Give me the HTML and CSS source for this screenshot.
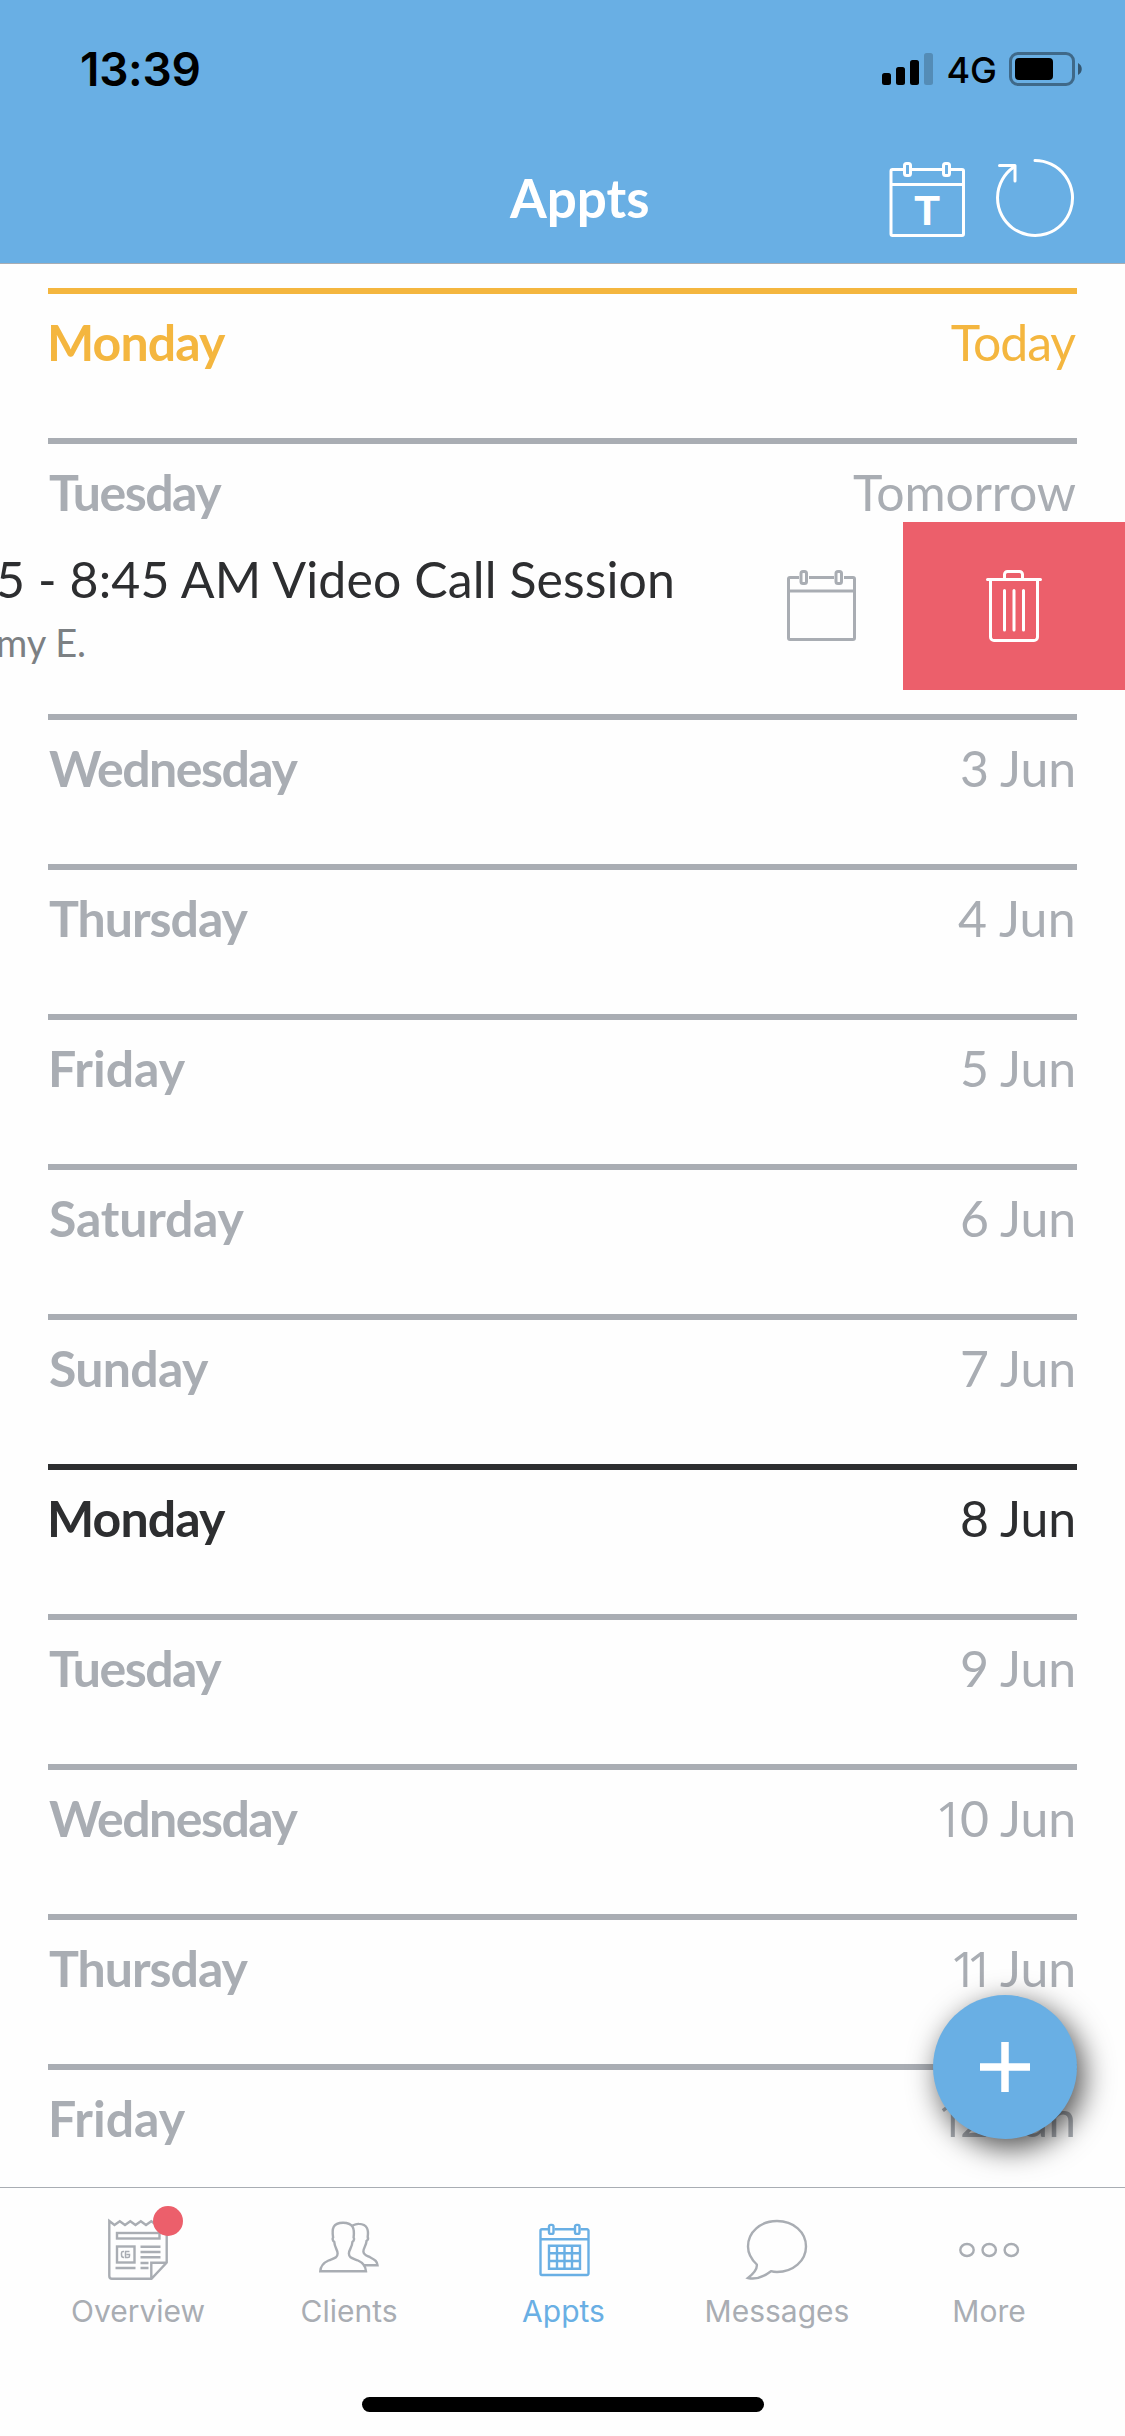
FILE: index.html
```
<!DOCTYPE html>
<html lang="en">
<head>
<meta charset="utf-8">
<title>Appts</title>
<link rel="stylesheet" href="styles.css">
</head>
<body>
<div class="app">
  <header class="header">
    <div class="status">
      <span class="status-time">13:39</span>
      <span class="status-right">
        <svg class="signal" width="51" height="32" viewBox="0 0 51 32">
          <rect x="0" y="20" width="9" height="12" rx="2.5"/>
          <rect x="14" y="14" width="9" height="18" rx="2.5"/>
          <rect x="28" y="7" width="9" height="25" rx="2.5"/>
          <rect x="42" y="0" width="9" height="32" rx="2.5" opacity=".2"/>
        </svg>
        <span class="network">4G</span>
        <svg class="battery" width="73" height="34" viewBox="0 0 73 34">
          <rect x="1.5" y="1.5" width="63" height="31" rx="7.5" fill="none" stroke="#000" stroke-width="3" opacity=".4"/>
          <rect x="6" y="6" width="38" height="22" rx="4"/>
          <path d="M69 11C74 13.500 74 20.500 69 23Z" opacity=".5"/>
        </svg>
      </span>
    </div>
    <div class="nav">
      <h1 class="nav-title">Appts</h1>
      <div class="nav-actions">
        <svg class="line-icon" width="80" height="80" viewBox="0 0 80 80">
          <path d="M16 9.500H5.500a1.500 1.500 0 0 0-1.500 1.500V74a1.500 1.500 0 0 0 1.500 1.500H75a1.500 1.500 0 0 0 1.500-1.500V11a1.500 1.500 0 0 0-1.500-1.500H64M25 9.500H55M4 24.500H76.500"/>
          <rect x="17.500" y="3.500" width="6" height="12" rx="2"/>
          <rect x="56.500" y="3.500" width="6" height="12" rx="2"/>
          <text class="today-letter" x="40" y="65" text-anchor="middle">T</text>
        </svg>
        <svg class="line-icon" width="80" height="80" viewBox="0 0 80 80">
          <path d="M40 .500A37.500 37.500 0 1 1 18.500 7.300M4.500 5.500H20V21"/>
        </svg>
      </div>
    </div>
  </header>

  <main class="schedule">
    <section class="day day--today"><div class="day-head"><span class="name name--mon">Monday</span><span class="date date--today">Today</span></div></section>
    <section class="day">
      <div class="day-head"><span class="name name--tue">Tuesday</span><span class="date date--tomorrow">Tomorrow</span></div>
      <div class="session">
        <div class="session-text">
          <div class="session-title">5 - 8:45 AM Video Call Session</div>
          <div class="session-client">my E.</div>
        </div>
        <svg class="session-calendar" width="70" height="74" viewBox="0 0 70 74">
          <path d="M12 7.500H3a1.500 1.500 0 0 0-1.500 1.500V68a1.500 1.500 0 0 0 1.500 1.500H66a1.500 1.500 0 0 0 1.500-1.500V9a1.500 1.500 0 0 0-1.500-1.500H57M22 7.500H47M1.500 21H67.500"/>
          <rect x="14" y="1.500" width="5.500" height="12" rx="2"/>
          <rect x="49" y="1.500" width="5.500" height="12" rx="2"/>
        </svg>
        <div class="delete">
          <svg class="line-icon" width="56" height="72" viewBox="0 0 56 72">
            <path d="M1.500 9.500H54.500M18.500 9V4.500a3 3 0 0 1 3-3H33.500a3 3 0 0 1 3 3V9M4.500 10V67a3.500 3.500 0 0 0 3.500 3.500H48a3.500 3.500 0 0 0 3.500-3.500V10M18.500 20.500V60M28 20.500V60M37.500 20.500V60"/>
          </svg>
        </div>
      </div>
    </section>
    <section class="day"><div class="day-head"><span class="name name--wed">Wednesday</span><span class="date date--single">3 Jun</span></div></section>
    <section class="day"><div class="day-head"><span class="name name--thu">Thursday</span><span class="date">4 Jun</span></div></section>
    <section class="day"><div class="day-head"><span class="name name--fri">Friday</span><span class="date date--single">5 Jun</span></div></section>
    <section class="day"><div class="day-head"><span class="name name--sat">Saturday</span><span class="date date--single">6 Jun</span></div></section>
    <section class="day"><div class="day-head"><span class="name name--sun">Sunday</span><span class="date date--single">7 Jun</span></div></section>
    <section class="day day--week"><div class="day-head"><span class="name name--mon">Monday</span><span class="date date--single">8 Jun</span></div></section>
    <section class="day"><div class="day-head"><span class="name name--tue">Tuesday</span><span class="date date--single">9 Jun</span></div></section>
    <section class="day"><div class="day-head"><span class="name name--wed">Wednesday</span><span class="date date--single"><span class="one">1</span>0 Jun</span></div></section>
    <section class="day"><div class="day-head"><span class="name name--thu">Thursday</span><span class="date date--single"><span class="one one--pair">1</span><span class="one one--last">1</span> Jun</span></div></section>
    <section class="day"><div class="day-head"><span class="name name--fri">Friday</span><span class="date date--single"><span class="one one--last">1</span>2 Jun</span></div></section>
    <button class="fab" aria-label="Add appointment">
      <svg width="50" height="50" viewBox="0 0 50 50"><path d="M25 0V50M0 25H50" stroke="#fff" stroke-width="7.500"/></svg>
    </button>
  </main>

  <nav class="tabs">
    <a class="tab">
      <span class="tab-icon">
        <svg width="60" height="60" viewBox="0 0 60 60">
          <path d="M1.300 1L6.500 5L11.800 1.300L17 5L22.300 1.300L27.500 5L32.800 1.300L38 5L43.300 1.300L48.500 5L53.800 1.300L58.700 5V42.500L43.500 58.700H4a2.700 2.700 0 0 1-2.700-2.700ZM58.700 42.700H43.300V58.500"/>
          <rect x="9" y="13" width="42.500" height="5.500"/>
          <rect x="9" y="26.500" width="17.500" height="16"/>
          <path d="M32.500 26.700H52.500M32.500 32H52.500M32.500 37.300H52.500M32.500 43H40.500M32.500 48H40.500M7.500 48H27.500"/>
          <path class="thin" d="M16 31.500H15a1.500 1.500 0 0 0-1.500 1.500V35a2.500 2.500 0 0 0 2.500 2.500M21.500 31.500H17.500V37.500H20a1.500 1.500 0 0 0 1.500-1.500V34.500H18.500"/>
        </svg>
        <span class="badge"></span>
      </span>
      <span class="tab-label">Overview</span>
    </a>
    <a class="tab">
      <span class="tab-icon">
        <svg width="60" height="60" viewBox="0 0 60 60">
          <path d="M1.300 51.200C1.600 46 4 43 9.500 40.500C15 38.200 18.600 38 18.600 33.500C18.600 29.500 15.500 27.500 15.300 22C13.400 20.500 13.300 18.500 14.100 17.500C12.800 9 13.500 2.800 24 2.700C34.500 2.800 35.700 9 34.600 17.500C35.400 18.500 35.300 20.500 33.400 22C33.200 27.500 29.900 29.500 29.900 33.500C29.900 38 33.500 38.200 39 40.500C44.500 43 46.700 46 47 51.200Z"/>
          <path d="M33.500 5.500C36 4.300 37.500 3.700 40 3.900C48.500 4.300 49.700 10 48.700 17C49.400 18.500 49 20 47.500 21C47.300 26 44.400 27.500 44.400 31.500C44.400 35 47.500 35.500 51.500 37.500C56.500 40 58 41.500 58.500 45.200H45"/>
        </svg>
      </span>
      <span class="tab-label">Clients</span>
    </a>
    <a class="tab tab--active">
      <span class="tab-icon">
        <svg width="60" height="60" viewBox="0 0 60 60">
          <path d="M14.500 9.300H8a1.500 1.500 0 0 0-1.500 1.500V53.500a1.500 1.500 0 0 0 1.500 1.500H53a1.500 1.500 0 0 0 1.500-1.500V10.800a1.500 1.500 0 0 0-1.500-1.500H46.500M20.500 9.300H40.500M6.500 19.300H54.500"/>
          <rect x="15" y="4.900" width="4.500" height="9" rx="1.700"/>
          <rect x="41" y="4.900" width="4.500" height="9" rx="1.700"/>
          <path d="M15 25.800H46V48.700H15ZM15 33.300H46M15 41H46M23 25.800V48.700M30.500 25.800V48.700M38 25.800V48.700"/>
        </svg>
      </span>
      <span class="tab-label">Appts</span>
    </a>
    <a class="tab">
      <span class="tab-icon">
        <svg width="60" height="60" viewBox="0 0 60 60">
          <path d="M1 58C6 54 10.500 49 9.800 44.500C4.500 39.500 1 34 1 26.500C1 12 13.500 1 30 1C46.500 1 59 12 59 26.500C59 41 46 52 30 52C27.500 52 26 51.800 24 51.200C17 56.500 9 60 1 58Z"/>
        </svg>
      </span>
      <span class="tab-label">Messages</span>
    </a>
    <a class="tab">
      <span class="tab-icon">
        <svg width="60" height="60" viewBox="0 0 60 60">
          <ellipse cx="8" cy="30" rx="6.700" ry="6"/>
          <ellipse cx="30.200" cy="30" rx="6.700" ry="6"/>
          <ellipse cx="52.300" cy="30" rx="6.700" ry="6"/>
        </svg>
      </span>
      <span class="tab-label">More</span>
    </a>
  </nav>
  <div class="home-area"><div class="home-indicator"></div></div>
</div>
</body>
</html>
```
FILE: styles.css
```
* { box-sizing: border-box; }

body {
  margin: 0;
  background: #fefefe;
  font-family: Lato, "Liberation Sans", sans-serif;
}

svg { display: block; overflow: visible; }

.app {
  display: flex;
  flex-direction: column;
  width: 1125px;
  height: 2436px;
  overflow: hidden;
}

/* Header */
.header {
  height: 264px;
  background: #69afe4;
  border-bottom: 1px solid #a9adb3;
}

.status {
  display: flex;
  justify-content: space-between;
  align-items: center;
  height: 132px;
  padding: 6px 43px 0 80px;
  font-family: Inter, sans-serif;
  color: #000;
}

.status-time {
  font-size: 46px;
  font-weight: 600;
  line-height: 56px;
  letter-spacing: -.3px;
}

.status-right { display: flex; align-items: center; }

.network {
  margin: 1px 12px 0 13px;
  font-size: 36px;
  font-weight: 500;
  line-height: 44px;
}

.nav {
  display: flex;
  justify-content: space-between;
  align-items: center;
  height: 131px;
  padding: 5px 50px 0 510px;
}

.nav-title {
  margin: 0 0 4px;
  font-size: 53px;
  font-weight: 700;
  line-height: 60px;
  color: #fff;
}

.nav-actions { display: flex; gap: 28px; }

.line-icon {
  fill: none;
  stroke: #fff;
  stroke-width: 3;
  stroke-linecap: round;
  stroke-linejoin: round;
}

.today-letter {
  fill: #fff;
  stroke: none;
  font: 700 42px "Liberation Sans", sans-serif;
}

/* Schedule */
.schedule {
  position: relative;
  flex: 0 0 1923px;
  min-height: 0;
  padding-top: 24px;
  overflow: hidden;
}

.day {
  min-height: 150px;
  padding-bottom: 24px;
  color: #a9adb3;
}

.day--today { color: #f4b63f; }
.day--week { color: #2d2e30; }

.day-head {
  display: flex;
  justify-content: space-between;
  height: 84px;
  margin: 0 48px;
  padding-top: 17px;
  border-top: 6px solid currentColor;
  font-size: 50px;
  line-height: 63px;
  white-space: nowrap;
}

.name { font-weight: 700; margin-left: 1px; }
.name--mon { letter-spacing: -.9px; margin-left: -1px; }
.name--tue { letter-spacing: -1.5px; }
.name--wed { letter-spacing: -1.5px; }
.name--thu { letter-spacing: -1px; }
.name--fri { letter-spacing: 0; margin-left: 0; }
.name--sat { letter-spacing: -.2px; }
.name--sun { letter-spacing: -.7px; }

.date { margin-right: 1px; letter-spacing: .3px; }
.date--single { letter-spacing: -.1px; }
.date--today { letter-spacing: -1.1px; margin-right: 2px; }
.date--tomorrow { letter-spacing: -.1px; margin-right: 1px; }

.one { font-family: "Open Sans", sans-serif; letter-spacing: -4px; }
.one--pair { letter-spacing: -12px; }
.one--last { letter-spacing: -6px; }

/* Swiped appointment row */
.session {
  display: flex;
  height: 168px;
}

.session-text {
  width: 787px;
  padding-top: 27px;
  white-space: nowrap;
}

.session-title {
  margin-left: -4px;
  font-size: 50px;
  line-height: 60px;
  letter-spacing: .1px;
  color: #2d2e30;
}

.session-client {
  margin-left: -4px;
  font-size: 38px;
  line-height: 66px;
  color: #7c8083;
}

.session-calendar {
  margin: 48px 46px 0 0;
  fill: none;
  stroke: #a9adb3;
  stroke-width: 3;
}

.delete {
  width: 222px;
  padding: 48px 0 0 83px;
  background: #ec5f6b;
}

.fab {
  position: absolute;
  top: 1731px;
  right: 48px;
  display: flex;
  align-items: center;
  justify-content: center;
  width: 144px;
  height: 144px;
  padding: 0;
  border: 0;
  border-radius: 50%;
  background: #69afe4;
  box-shadow: 6px 9px 30px rgba(0, 0, 0, .7);
}

/* Tab bar */
.tabs {
  display: grid;
  flex: 0 0 160px;
  grid-template-columns: 214px 208px 221px 206px 218px;
  padding: 32px 27px 0 31px;
  border-top: 1px solid #a9adb3;
  background: #fefefe;
  color: #a9adb3;
}

.tab {
  display: flex;
  flex-direction: column;
  align-items: center;
}

.tab--active { color: #69afe4; }

.tab-icon {
  position: relative;
  width: 60px;
  height: 60px;
}

.tab-icon svg {
  fill: none;
  stroke: currentColor;
  stroke-width: 2.4;
}

.tab-icon .thin { stroke-width: 1.5; }

.badge {
  position: absolute;
  top: -14px;
  left: 45px;
  width: 30px;
  height: 30px;
  border-radius: 50%;
  background: #ec5f6b;
}

.tab-label {
  margin-top: 11px;
  font: 400 30px/40px Inter, sans-serif;
}

.home-area {
  display: flex;
  flex: 1;
  justify-content: center;
  padding-top: 50px;
  background: #fefefe;
}

.home-indicator {
  width: 402px;
  height: 15px;
  border-radius: 8px;
  background: #000;
}
```
